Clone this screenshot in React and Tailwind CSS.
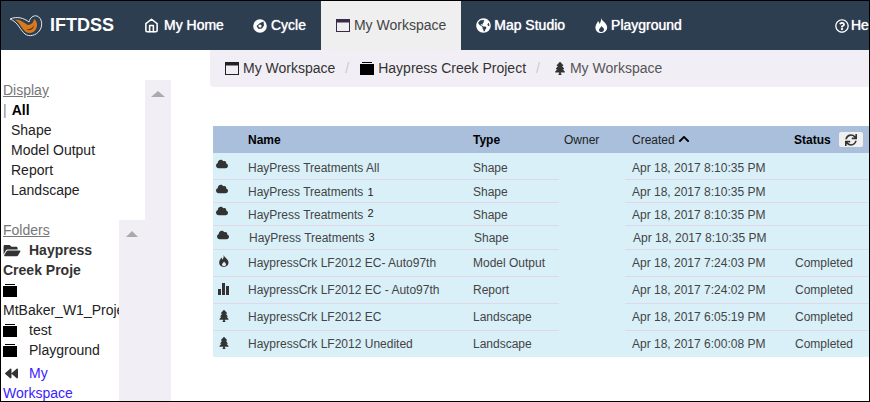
import React from 'react';
import { FaCloud, FaTree, FaFolderOpen, FaBackward, FaSync, FaRegQuestionCircle, FaGlobeAmericas, FaChevronUp } from 'react-icons/fa';
import { FiHome } from 'react-icons/fi';

const WindowIcon = ({ className }) => (
    <svg viewBox="0 0 14 13" className={className} fill="none" stroke="currentColor">
        <rect x="0.5" y="0.5" width="13" height="12" />
        <rect x="0.5" y="0.5" width="13" height="2.5" fill="currentColor" />
    </svg>
);

const FolderIcon = ({ className }) => (
    <svg viewBox="0 0 14 13" className={className} fill="currentColor" shapeRendering="crispEdges">
        <rect x="2" y="0" width="10" height="1" />
        <rect x="0" y="2" width="14" height="11" />
    </svg>
);

const CycleIcon = ({ className }) => (
    <svg viewBox="0 0 14 14" className={className}>
        <circle cx="7" cy="7" r="6.8" fill="#fff" />
        <path d="M7 4 L10.5 2.5 L11 6.5 L9 9.5 L5.5 10 L3.5 7 Z" fill="#2c3e50" />
        <circle cx="7" cy="7" r="1.6" fill="#fff" />
    </svg>
);

const BarsIcon = ({ className }) => (
    <svg viewBox="0 0 12 12" className={className} fill="currentColor">
        <rect x="0" y="6" width="3" height="6" />
        <rect x="4" y="0" width="3" height="12" />
        <rect x="8" y="3" width="3" height="9" />
    </svg>
);

const FlameIcon = ({ className }) => (
    <svg viewBox="0 0 13 15" className={className} fill="currentColor">
        <path fillRule="evenodd" d="M6 0 C7 3 10 4 11.5 7 C13.5 11 10.5 15 6.5 15 C2.5 15 0 12 0.5 8.5 C1 6 2.5 5 3 3 C4 4 4.5 5 4.5 6 C5.5 4.5 6.5 2.5 6 0 Z M6.5 8 C5.5 10 4 10.5 4 12 C4 13.5 5 14 6.5 14 C8 14 9 13 9 11.5 C9 10 7.5 9.5 6.5 8 Z" />
    </svg>
);

const Logo = () => (
    <svg viewBox="0 0 34 24" className="w-[34px] h-[24px] shrink-0">
        <path d="M1 5 C8 2 15 4 20 8 C21 4 24 1 28 2 C33 4 34 11 31 16 C27 22 20 23 16 20 C11 16 9 8 1 5 Z" fill="#2c3e50" stroke="#e5e7eb" strokeWidth="1" />
        <path d="M6 5.5 C12 5.5 15 9 19 11 C22 11 25 8 25 5 C28 7 29 11 27 15 C25 19 20 20 17 18 C13 15 11 9 6 5.5 Z" fill="#d97a1c" />
        <path d="M17 15 C20 16 24 14 25 11 C25 15 21 18 17 15 Z" fill="#6b3308" />
    </svg>
);

const navItems = [
    { label: 'My Home', Icon: FiHome, iconClass: 'w-[15px] h-[15px] stroke-[2.5]', box: 'gap-[5px] pl-[15px] pr-[14px]' },
    { label: 'Cycle', Icon: CycleIcon, iconClass: 'w-[14px] h-[14px]', box: 'gap-[4px] px-[15px]' },
    { label: 'My Workspace', Icon: WindowIcon, iconClass: 'w-[14px] h-[13px] text-[#3b2a4a]', box: 'gap-[4px] px-[15px]', active: true },
    { label: 'Map Studio', Icon: FaGlobeAmericas, iconClass: 'w-[15px] h-[15px]', box: 'gap-[3px] px-[15px]' },
    { label: 'Playground', Icon: FlameIcon, iconClass: 'w-[13px] h-[15px]', box: 'gap-[3px] px-[15px]' },
];

const created = 'Apr 18, 2017 8:10:35 PM';
const rows = [
    { Icon: FaCloud, name: 'HayPress Treatments All', type: 'Shape', created, status: '', h: 'h-[26px]', text: 'pt-[4px]', icon: 'mb-[3px] ml-[1px]' },
    { Icon: FaCloud, name: 'HayPress Treatments', tail: '1', type: 'Shape', created, status: '', h: 'h-[23px]', text: 'pt-[2px]', icon: 'mb-[3px] ml-[1px]' },
    { Icon: FaCloud, name: 'HayPress Treatments', tail: '2', tailClass: '-translate-y-[2px]', type: 'Shape', created, status: '', h: 'h-[23px]', text: 'pt-[2px]', icon: 'mb-[5px] ml-[1px]' },
    { Icon: FaCloud, name: 'HayPress Treatments', tail: '3', tailClass: '-translate-y-[1px]', type: 'Shape', created, status: '', h: 'h-[24px]', text: 'pt-[1px]', icon: 'mb-[5px] ml-[2px]', nudge: true },
    { Icon: FlameIcon, name: 'HaypressCrk LF2012 EC- Auto97th', type: 'Model Output', created: 'Apr 18, 2017 7:24:03 PM', status: 'Completed', h: 'h-[27px]', text: '', icon: 'mb-[3px] ml-[3px]' },
    { Icon: BarsIcon, name: 'HaypressCrk LF2012 EC - Auto97th', type: 'Report', created: 'Apr 18, 2017 7:24:02 PM', status: 'Completed', h: 'h-[27px]', text: '', icon: 'mb-[1px] ml-[3px]' },
    { Icon: FaTree, name: 'HaypressCrk LF2012 EC', type: 'Landscape', created: 'Apr 18, 2017 6:05:19 PM', status: 'Completed', h: 'h-[27px]', text: '', icon: 'mb-[1px] ml-[3px]' },
    { Icon: FaTree, name: 'HaypressCrk LF2012 Unedited', type: 'Landscape', created: 'Apr 18, 2017 6:00:08 PM', status: 'Completed', h: 'h-[27px]', text: '', icon: 'mb-[1px] ml-[3px]' },
];

const Header = () => (
    <div className="flex h-[49px] bg-[#2c3e50] text-white text-[14px] shrink-0 whitespace-nowrap">
        <div className="flex items-center w-[128px] shrink-0 pl-[8px] gap-[7px]">
            <Logo />
            <span className="text-[18px] font-bold">IFTDSS</span>
        </div>
        {navItems.map(({ label, Icon, iconClass, box, active }) => (
            <div
                key={label}
                className={`flex items-center shrink-0 ${box} ${active ? 'bg-[#efefef] text-[#444]' : '[text-shadow:0_0_1px_#fff]'}`}
            >
                <Icon className={iconClass} />
                <span>{label}</span>
            </div>
        ))}
        <div className="flex items-center shrink-0 gap-[2px] ml-[123px] pl-[15px] [text-shadow:0_0_1px_#fff]">
            <FaRegQuestionCircle className="w-[14px] h-[14px]" />
            <span>Help</span>
        </div>
    </div>
);

const Sidebar = () => (
    <div className="w-[170px] shrink-0 flex flex-col pt-[30px] text-[14px] leading-[20px] text-[#222]">
        <div className="flex h-[140px]">
            <div className="w-[144px] pl-[2px]">
                <div className="text-[#777] underline">Display</div>
                <div className="font-bold text-black">
                    <span className="font-normal text-[#888] mr-[5px]">|</span>All
                </div>
                {['Shape', 'Model Output', 'Report', 'Landscape'].map((t) => (
                    <div key={t} className="pl-[8px]">{t}</div>
                ))}
            </div>
            <div className="w-[26px] bg-[#f2eef5] flex justify-center pt-[11px]">
                <div className="w-0 h-0 border-x-[7px] border-b-[6px] border-x-transparent border-b-[#aaa]" />
            </div>
        </div>
        <div className="flex flex-1 min-h-0">
            <div className="w-[118px] pl-[2px] overflow-hidden">
                <div className="text-[#777] underline">Folders</div>
                <div className="font-bold text-[#333]">
                    <FaFolderOpen className="inline w-[18px] h-[15px] mr-[8px] -mt-[2px]" />
                    Haypress Creek Proje
                </div>
                <div>
                    <FolderIcon className="inline w-[14px] h-[13px] text-black mr-[12px] -mt-[2px]" />
                    <span>MtBaker_W1_Project</span>
                </div>
                <div>
                    <FolderIcon className="inline w-[14px] h-[13px] text-black mr-[12px] -mt-[2px]" />
                    test
                </div>
                <div>
                    <FolderIcon className="inline w-[14px] h-[13px] text-black mr-[12px] -mt-[2px]" />
                    Playground
                </div>
                <div className="mt-[3px] text-[#3b22ff]">
                    <FaBackward className="inline w-[13px] h-[13px] ml-[2px] mr-[11px] -mt-[2px] text-[#333]" />
                    My Workspace
                </div>
            </div>
            <div className="flex-1 bg-[#f2eef5] flex justify-start pl-[7px] pt-[11px]">
                <div className="w-0 h-0 border-x-[6px] border-b-[6px] border-x-transparent border-b-[#aaa]" />
            </div>
        </div>
    </div>
);

const Breadcrumb = () => (
    <div className="ml-[39px] h-[37px] bg-[#f2eef5] rounded-bl-[4px] flex items-center pl-[15px] text-[14px] text-[#333] shrink-0">
        <WindowIcon className="w-[14px] h-[13px] text-[#222] mr-[4px]" />
        <span>My Workspace</span>
        <span className="text-[#ccc] mx-[10px]">/</span>
        <FolderIcon className="w-[14px] h-[13px] text-black ml-[1px] mr-[4px]" />
        <span>Haypress Creek Project</span>
        <span className="text-[#ccc] ml-[10px] mr-[14px]">/</span>
        <FaTree className="w-[12px] h-[13px] text-[#333] mr-[4px]" />
        <span className="text-[#555]">My Workspace</span>
    </div>
);

const Table = () => (
    <table className="ml-[42px] mt-[39px] w-[656px] table-fixed border-collapse text-[12px] text-[#444]">
        <colgroup>
            <col className="w-[30px]" />
            <col className="w-[225px]" />
            <col className="w-[91px]" />
            <col className="w-[66px]" />
            <col className="w-[163px]" />
            <col className="w-[81px]" />
        </colgroup>
        <thead>
            <tr className="h-[27px] bg-[#a9bfdc] text-[#222] text-left">
                <th />
                <th className="pl-[5px] font-bold text-black">Name</th>
                <th className="pl-[5px] font-bold text-black">Type</th>
                <th className="pl-[5px] font-normal">Owner</th>
                <th className="pl-[7px] font-normal whitespace-nowrap">
                    Created
                    <FaChevronUp className="inline w-[12px] h-[12px] ml-[3px] -mt-[2px] text-black" />
                </th>
                <th className="pl-[6px] font-bold">
                    <div className="flex items-center">
                        <span className="text-black">Status</span>
                        <span className="ml-[8px] w-[24px] h-[15px] bg-[#f0f0f0] rounded-[2px] flex items-center justify-center">
                            <FaSync className="w-[12px] h-[12px] text-[#333]" />
                        </span>
                    </div>
                </th>
            </tr>
        </thead>
        <tbody className="bg-[#d9f0f8]">
            {rows.map((r, i) => {
                const line = i < rows.length - 1 ? 'border-b border-[#e0d8e6]' : '';
                const nudge = r.nudge ? 'pl-[6px]' : 'pl-[5px]';
                return (
                    <tr key={i} className={r.h}>
                        <td className={`${line} pl-[2px]`}>
                            <r.Icon className={`w-[12px] h-[12px] text-[#333] ${r.icon}`} />
                        </td>
                        <td className={`${line} ${nudge} ${r.text} whitespace-nowrap`}>
                            {r.name}
                            {r.tail && <span className={`inline-block ml-[4px] text-[11px] text-[#222] ${r.tailClass || ''}`}>{r.tail}</span>}
                        </td>
                        <td className={`${line} ${nudge} ${r.text}`}>{r.type}</td>
                        <td />
                        <td className={`${line} ${r.nudge ? 'pl-[8px]' : 'pl-[7px]'} ${r.text} whitespace-nowrap`}>{r.created}</td>
                        <td className={`${line} pl-[7px] ${r.text}`}>{r.status}</td>
                    </tr>
                );
            })}
        </tbody>
    </table>
);

const App = () => (
    <div className="w-[870px] h-[402px] border border-black overflow-hidden flex flex-col bg-white font-['Liberation_Sans',Arial,sans-serif]">
        <Header />
        <div className="flex flex-1 min-h-0">
            <Sidebar />
            <div className="flex-1 min-w-0 flex flex-col">
                <Breadcrumb />
                <Table />
            </div>
        </div>
    </div>
);

export default App;
